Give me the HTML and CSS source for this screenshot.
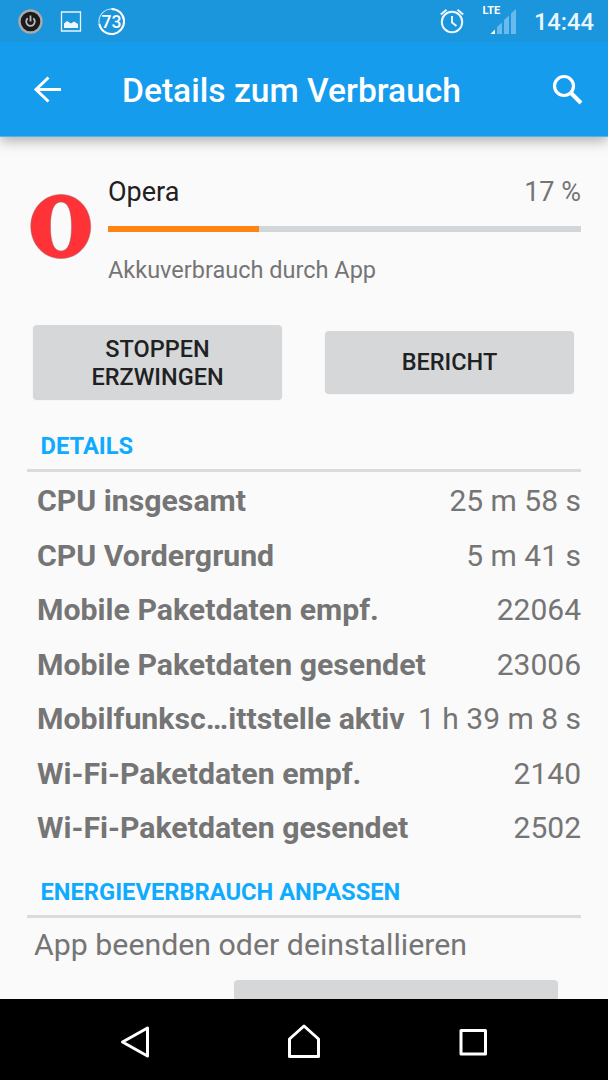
FILE: index.html
```html
<!DOCTYPE html>
<html lang="de">
<head>
<meta charset="utf-8">
<title>Details zum Verbrauch</title>
<link rel="stylesheet" href="styles.css">
</head>
<body>
<div class="screen">
  <header class="top">
    <div class="status">
      <svg class="status-left" width="130" height="42" viewBox="0 0 130 42">
        <circle cx="30.500" cy="21.500" r="11" fill="#1b1b1d" stroke="#aaa" stroke-width="2.400"/>
        <path d="M27.700 18.300a4.300 4.300 0 1 0 5.600 0M30.500 15.500v6" fill="none" stroke="#bbb" stroke-width="1.800"/>
        <path d="M61.500 12h19v19h-19z" fill="none" stroke="#e8f4fc" stroke-width="1.300"/>
        <path d="M64 28v-4.500l3-2.500 4 2.500 3-2 4 2.500v4z" fill="#eef7fd"/>
        <circle cx="111.500" cy="21.500" r="12.500" fill="none" stroke="#b9dff8" stroke-width="1.200"/>
        <path d="M111.500 9a12.500 12.500 0 1 1-12.200 15" fill="none" stroke="#fff" stroke-width="2"/>
        <text x="111.500" y="27.500" text-anchor="middle" class="charge">73</text>
      </svg>
      <div class="status-right">
        <svg width="84" height="42" viewBox="0 0 84 42">
          <g fill="none" stroke="#eef7fd" stroke-width="2">
            <circle cx="16" cy="22" r="10.200"/>
            <path d="M4.800 14.500l5.700-4.800M27.200 14.500l-5.700-4.800M16 16v6.500l4.500 3.500"/>
          </g>
          <text x="46.500" y="13.500" class="lte">LTE</text>
          <path d="M54.500 34l4.500-4.500V34z" fill="#fff"/>
          <path d="M61 34v-7l5-4.500V34zM68 34V20l5-4.500V34zM75 34V13.500l5-4.500V34z" fill="#69bbee"/>
        </svg>
        <span class="clock">14:44</span>
      </div>
    </div>
    <div class="toolbar">
      <svg width="28" height="28" viewBox="0 0 28 28" class="back"><path d="M28 13.500H3M15.500 1.500L3 13.500l12.500 12" fill="none" stroke="#fff" stroke-width="3"/></svg>
      <h1 class="title">Details zum Verbrauch</h1>
      <svg width="32" height="32" viewBox="0 0 32 32" class="search"><circle cx="12" cy="12" r="9.500" fill="none" stroke="#fff" stroke-width="3.200"/><path d="M19 19l10 10" stroke="#fff" stroke-width="4"/></svg>
    </div>
  </header>
  <main class="content">
    <section class="app">
      <svg class="logo" width="62" height="66" viewBox="0 0 62 66"><path fill-rule="evenodd" fill="#ff3337" stroke="#996569" stroke-width=".5" d="M31 .5C48 .5 60.700 14.500 60.700 32.500S48 64.500 31 64.500 .8 50.500 .8 32.500 14 .5 31 .5zM31 8C23.500 8 20.500 17.500 20.500 32.500S23.500 57 31 57 41.500 47.500 41.500 32.500 38.500 8 31 8z"/></svg>
      <div class="app-info">
        <div class="app-line"><span class="app-name">Opera</span><span class="percent">17 %</span></div>
        <div class="bar"><div class="bar-fill" style="width:32%"></div></div>
        <div class="note">Akkuverbrauch durch App</div>
      </div>
    </section>
    <div class="buttons">
      <button class="btn tall">STOPPEN<br>ERZWINGEN</button>
      <button class="btn">BERICHT</button>
    </div>
    <h2 class="heading">DETAILS</h2>
    <dl class="rows">
      <div class="row"><dt>CPU insgesamt</dt><dd>25 m 58 s</dd></div>
      <div class="row"><dt>CPU Vordergrund</dt><dd>5 m 41 s</dd></div>
      <div class="row"><dt>Mobile Paketdaten empf.</dt><dd>22064</dd></div>
      <div class="row"><dt>Mobile Paketdaten gesendet</dt><dd>23006</dd></div>
      <div class="row"><dt>Mobilfunksc…ittstelle aktiv</dt><dd>1 h 39 m 8 s</dd></div>
      <div class="row"><dt>Wi-Fi-Paketdaten empf.</dt><dd>2140</dd></div>
      <div class="row"><dt>Wi-Fi-Paketdaten gesendet</dt><dd>2502</dd></div>
    </dl>
    <h2 class="heading second">ENERGIEVERBRAUCH ANPASSEN</h2>
    <p class="hint">App beenden oder deinstallieren</p>
    <div class="partial"></div>
  </main>
  <nav class="nav">
    <svg width="608" height="81" viewBox="0 0 608 81" fill="none" stroke="#fff" stroke-width="3" stroke-linejoin="round">
      <path d="M147.500 29v28L122.500 43z"/>
      <path d="M289.500 57.500V40L304 27l14.500 13v17.500z"/>
      <path d="M461 31.500h24.500v23.500H461z"/>
    </svg>
  </nav>
</div>
</body>
</html>
```
FILE: styles.css
```css
* { box-sizing: border-box; }
body { margin: 0; font-family: Roboto, sans-serif; background: #fafafa; }
.screen { width: 608px; height: 1080px; display: flex; flex-direction: column; overflow: hidden; }
.top { flex: none; z-index: 1; height: 137px; background: #169ced; border-bottom: 1px solid #54b3ea; box-shadow: 0 4px 12px rgba(0,0,0,.3); }
.status { height: 42px; background: #1b95db; display: flex; justify-content: space-between; }
.status-right { display: flex; padding-right: 14px; gap: 14px; }
.charge { font: 500 17.5px Roboto, sans-serif; fill: #fff; }
.lte { font: 700 11px Roboto, sans-serif; fill: #fff; }
.clock { font-size: 23.7px; font-weight: 500; line-height: 45px; color: #eaf5fc; }
.toolbar { height: 94px; display: flex; align-items: center; padding: 2px 24px 0 33px; }
.title { flex: 1; margin: 1px 0 0 61px; font-size: 33.6px; font-weight: 500; line-height: 40px; color: #fff; white-space: nowrap; }
.content { flex: 1; min-height: 0; overflow: hidden; }
.app { display: flex; padding: 37px 27px 0 30px; }
.logo { margin-top: 20px; }
.app-info { flex: 1; margin-left: 16px; }
.app-line { display: flex; justify-content: space-between; font-size: 27px; line-height: 36px; }
.app-name { color: #202020; }
.percent { color: #757575; }
.bar { height: 6px; margin-top: 16px; background: #d2d6d8; }
.bar-fill { height: 6px; background: #ff8512; }
.note { margin-top: 20px; font-size: 23.5px; line-height: 36px; color: #757575; }
.buttons { display: flex; align-items: center; gap: 43px; padding: 0 33px; margin-top: 37px; }
.btn { width: 249px; height: 62px; padding: 2px 0 0; border: 0; border-radius: 4px; background: #d6d7d8; box-shadow: 0 1px 1px #d0d1d2; font: 500 23.5px/27.5px Roboto, sans-serif; color: #202122; }
.tall { height: 74px; padding-top: 3px; }
.heading { height: 43px; margin: 30px 27px 0; padding: 0 14px 0 13.5px; border-bottom: 3px solid #dbdbdb; font-size: 23.7px; font-weight: 700; line-height: 35px; color: #0fabff; }
.rows { margin: 2px 27px 0 37px; }
.row { display: flex; justify-content: space-between; height: 54.57px; font-size: 30px; line-height: 54.4px; color: #757575; white-space: nowrap; }
.row dt { font-size: 30.25px; font-weight: 700; }
.row dd { margin: 0; }
.heading.second { margin-top: 19px; }
.hint { margin: 4px 34px 0; font-size: 30.3px; line-height: 45px; color: #757575; white-space: nowrap; }
.partial { width: 324px; height: 40px; margin: 13px 0 0 234px; border-radius: 4px; background: #d6d7d8; }
.nav { flex: none; height: 81px; background: #000; }
.nav svg { display: block; }
```
